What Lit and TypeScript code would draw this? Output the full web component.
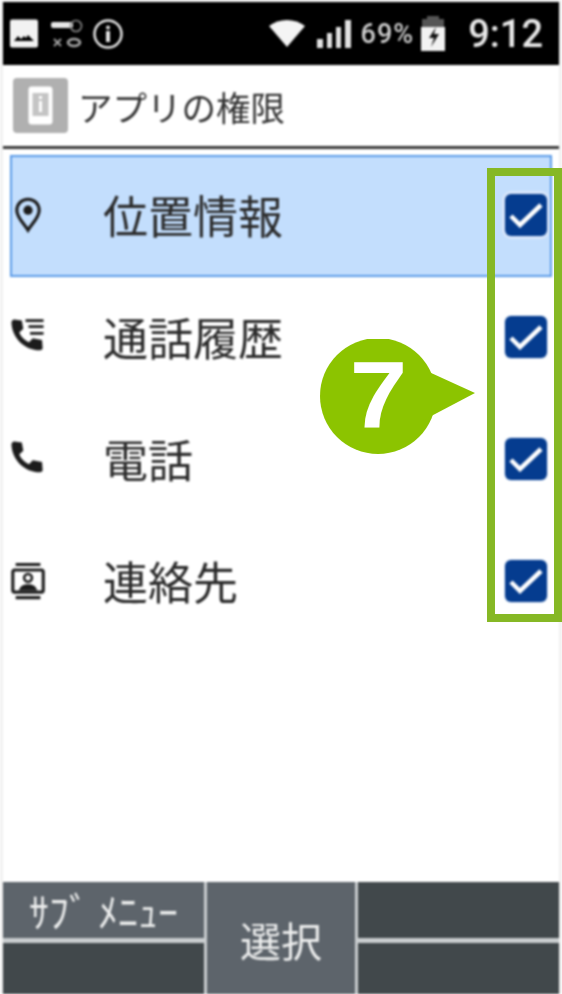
import { css, html, LitElement, svg } from "lit";
import { customElement } from "lit/decorators.js";

const HANDSET = svg`<path d="M5.500 3.200l5 .8 1 5.500-2.700 2.400c1.300 3 3.500 5.200 6.500 6.500l2.500-2.700 6.200 1.300.4 5.500c-.2.800-.9 1.300-1.800 1.300C12.300 23.800 3.900 15.300 3.600 5.200c0-1 .8-1.900 1.900-2z" fill="#1c1c1c"/>`;

const ICONS: Record<string, { box: string; body: unknown }> = {
  pin: {
    box: "0 0 28 34.600",
    body: svg`<path d="M14 3.500c-5.200 0-9.200 4-9.200 9.200 0 5.600 5.400 10.200 9.200 16.300 3.800-6.100 9.200-10.700 9.200-16.300 0-5.200-4-9.200-9.200-9.200z" fill="none" stroke="#1c1c1c" stroke-width="2.600"/><circle cx="14" cy="12.500" r="3.800" fill="#1c1c1c"/>`,
  },
  history: {
    box: "3.300 1.600 22.670 28",
    body: svg`${HANDSET}<path d="M13 4h12M15 8h10M16 12.500h9" stroke="#1c1c1c" stroke-width="1.800" fill="none"/>`,
  },
  phone: { box: "3.300 1.600 22.670 28", body: HANDSET },
  contact: {
    box: "1.400 -0.150 26.150 32.300",
    body: svg`<path d="M5 2.500h19M5 28h19" stroke="#1c1c1c" stroke-width="2.400" fill="none"/><rect x="2.800" y="6.800" width="23.400" height="17" rx="1.500" fill="none" stroke="#1c1c1c" stroke-width="2.400"/><circle cx="14.500" cy="12.800" r="3" fill="none" stroke="#1c1c1c" stroke-width="2"/><path d="M7.500 22.500c1-3.800 3.800-4.800 7-4.800s6 1 7 4.800z" fill="#1c1c1c"/>`,
  },
};

const ROWS = [
  { label: "位置情報", icon: "pin", selected: true },
  { label: "通話履歴", icon: "history", selected: false },
  { label: "電話", icon: "phone", selected: false },
  { label: "連絡先", icon: "contact", selected: false },
];

@customElement("app-root")
export class AppRoot extends LitElement {
  static styles = css`
    :host {
      display: block;
      position: relative;
      width: 562px;
      height: 994px;
      overflow: hidden;
      background: #fff;
      font-family: "Noto Sans CJK JP", "Noto Sans", sans-serif;
    }
    .screen {
      height: 994px;
      box-sizing: border-box;
      padding: 2px 3px 0;
      background: #f1f1f1;
      display: flex;
      flex-direction: column;
      filter: blur(0.8px);
    }
    .status {
      height: 63px;
      flex: none;
      background: #000;
      color: #e4e4e4;
      display: flex;
      align-items: center;
      padding: 0 16px 0 7px;
    }
    .status svg {
      display: block;
      flex: none;
    }
    .left {
      display: flex;
      align-items: center;
      gap: 9px;
    }
    .keyset {
      margin-left: 4px;
    }
    .right {
      margin-left: auto;
      display: flex;
      align-items: center;
    }
    .wifi {
      margin-right: 12px;
    }
    .pct {
      font-family: "Roboto", sans-serif;
      font-size: 27px;
      font-weight: 500;
      letter-spacing: 1px;
      color: #cfcfcf;
      margin: 0 6px 0 8px;
    }
    .time {
      font-family: "Roboto", sans-serif;
      font-size: 38px;
      font-weight: 500;
      margin-left: 22px;
      color: #e8e8e8;
    }
    .main {
      flex: 1;
      background: #fff;
      display: flex;
      flex-direction: column;
    }
    .title {
      height: 81px;
      flex: none;
      display: flex;
      align-items: center;
      gap: 10px;
      padding-left: 10px;
      font-size: 34.500px;
      color: #333;
      box-sizing: border-box;
    }
    .app-icon {
      width: 55px;
      height: 55px;
      background: #b0b0b0;
      border-radius: 4px;
      display: flex;
      align-items: center;
      justify-content: center;
    }
    .rule {
      height: 3px;
      flex: none;
      background: #3a3a3a;
      margin-bottom: 6px;
    }
    .list {
      flex: 1;
    }
    .row {
      height: 122px;
      box-sizing: border-box;
      margin: 0 7px;
      display: flex;
      align-items: center;
      border: 2px solid transparent;
      padding-right: 3px;
    }
    .row.sel {
      background: #c3defd;
      border-color: #5b9be8;
    }
    .row-icon {
      flex: none;
      width: 34px;
      height: 42px;
      margin-left: -1px;
      margin-right: 58px;
    }
    .label {
      font-size: 45px;
      color: #2a2a2a;
      line-height: 1;
      margin-bottom: 4px;
    }
    .check {
      margin-left: auto;
      margin-bottom: 2px;
      width: 42px;
      height: 42px;
      border-radius: 6px;
      background: #053c8f;
      box-shadow: 0 0 0 1px #dfe9f8;
      display: flex;
      align-items: center;
      justify-content: center;
    }
    .row.sel .check {
      box-shadow: 0 0 0 3px #d8e6fb;
    }
    .softkeys {
      height: 112px;
      flex: none;
      display: grid;
      grid-template-columns: 201px 148px 1fr;
      column-gap: 3px;
      background: #c9cdcf;
    }
    .key-col {
      display: grid;
      grid-template-rows: 56px 1fr;
      row-gap: 5px;
    }
    .key {
      display: flex;
      align-items: center;
      justify-content: center;
      color: #eceded;
      background: #41484b;
    }
    .key.on {
      background: #5d646b;
    }
    .key.sub {
      font-size: 40px;
      line-height: 1;
    }
    .key.mid {
      font-size: 41px;
      padding-top: 2px;
    }
    .frame {
      position: absolute;
      left: 487px;
      top: 168px;
      width: 75px;
      height: 454px;
      box-sizing: border-box;
      border: 8px solid #86b825;
    }
    .bubble {
      position: absolute;
      left: 318px;
      top: 339px;
      width: 158px;
      height: 116px;
    }
    .seven {
      position: absolute;
      left: 321px;
      top: 339px;
      width: 115px;
      height: 113px;
      display: flex;
      align-items: center;
      justify-content: center;
      color: #fff;
      font-family: "Liberation Sans", sans-serif;
      font-weight: 700;
      font-size: 94px;
      line-height: 1;
      transform: scaleX(1.1);
    }
  `;

  render() {
    return html`
      <div class="screen">
        <div class="status">
          <div class="left">
            <svg width="28" height="29" viewBox="0 0 28 29">
              <rect width="28" height="28" y="0.500" rx="2" fill="#f2f2f2"/>
              <path d="M4 22l4-5 3 3 3-3 2 2 2-3 6 6z" fill="#000"/>
            </svg>
            <svg class="keyset" width="32" height="30" viewBox="0 0 32 30">
              <rect x="0" y="3" width="22" height="6" rx="2" fill="#e8e8e8"/>
              <circle cx="25" cy="7" r="5.500" fill="none" stroke="#8a8a8a" stroke-width="1.600"/>
              <path d="M3 20l7 7M10 20l-7 7" stroke="#a5a5a5" stroke-width="1.800"/>
              <ellipse cx="23" cy="23.500" rx="6" ry="3.500" fill="none" stroke="#a5a5a5" stroke-width="2.600"/>
            </svg>
            <svg width="32" height="32" viewBox="0 0 32 32">
              <circle cx="16" cy="16" r="13.500" fill="none" stroke="#e4e4e4" stroke-width="2.500"/>
              <circle cx="16" cy="9.500" r="2" fill="#e4e4e4"/>
              <rect x="14" y="13" width="4" height="11" fill="#e4e4e4"/>
            </svg>
          </div>
          <div class="right">
            <svg class="wifi" width="36" height="28" viewBox="0 0 36 28">
              <path d="M0 6C10-2 26-2 36 6L18 27z" fill="#f4f4f4"/>
            </svg>
            <svg width="36" height="30" viewBox="0 0 36 30">
              <rect x="0" y="20" width="6" height="9" fill="#e2e2e2"/>
              <rect x="10" y="14" width="5" height="15" fill="#e2e2e2"/>
              <rect x="19" y="8" width="5" height="21" fill="#e2e2e2"/>
              <rect x="28" y="1" width="6" height="28" fill="#e2e2e2"/>
            </svg>
            <span class="pct">69%</span>
            <svg width="26" height="36" viewBox="0 0 26 36">
              <path d="M7 0h12v3h5v10H2V3h5z" fill="#555"/>
              <path d="M1 11h24v24H1z" fill="#f2f2f2"/>
              <path d="M16 11l-7 11h5l-3 9 8-13h-5z" fill="#111"/>
            </svg>
            <span class="time">9:12</span>
          </div>
        </div>
        <div class="main">
          <div class="title">
            <div class="app-icon">
              <svg width="25" height="39" viewBox="0 0 25 39">
                <rect x="0.500" y="0.500" width="24" height="38" rx="3" fill="#fff"/>
                <rect x="4.500" y="7" width="16" height="23" fill="#c4c4c4"/>
                <rect x="11" y="10" width="3" height="3" fill="#fff"/>
                <rect x="11" y="15" width="3" height="11" fill="#fff"/>
              </svg>
            </div>
            <span>アプリの権限</span>
          </div>
          <div class="rule"></div>
          <div class="list">
            ${ROWS.map(
              (r) => html`
                <div class="row ${r.selected ? "sel" : ""}">
                  <svg class="row-icon" viewBox=${ICONS[r.icon].box}>${ICONS[r.icon].body}</svg>
                  <span class="label">${r.label}</span>
                  <div class="check">
                    <svg width="34" height="26" viewBox="0 0 34 26">
                      <path d="M2 14l9 9L32 3" fill="none" stroke="#fff" stroke-width="4.500"/>
                    </svg>
                  </div>
                </div>
              `
            )}
          </div>
          <div class="softkeys">
            <div class="key-col">
              <div class="key on sub">ｻﾌﾞ ﾒﾆｭｰ</div>
              <div class="key"></div>
            </div>
            <div class="key on mid">選択</div>
            <div class="key-col">
              <div class="key"></div>
              <div class="key"></div>
            </div>
          </div>
        </div>
      </div>
      <div class="frame"></div>
      <svg class="bubble" viewBox="0 0 158 116">
        <circle cx="60" cy="57" r="58" fill="#8cc400"/>
        <path d="M100 28L157 54 100 84z" fill="#8cc400"/>
      </svg>
      <div class="seven">7</div>
    `;
  }
}
